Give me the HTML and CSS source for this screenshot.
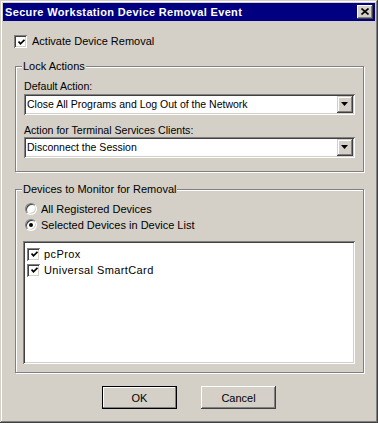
FILE: index.html
```html
<!DOCTYPE html>
<html lang="en">
<head>
    <meta charset="UTF-8">
    <title>Secure Workstation Device Removal Event</title>
    <link rel="stylesheet" href="styles.css">
</head>
<body>
    <div class="window">
        <div class="titlebar">
            <span class="title">Secure Workstation Device Removal Event</span>
            <span class="close-btn">
                <svg width="8" height="7" viewBox="0 0 8 7"><path d="M0.5 0.5 L7.5 6.5 M7.5 0.5 L0.5 6.5" stroke="#000" stroke-width="1.6" fill="none"/></svg>
            </span>
        </div>
        <div class="content">
            <div class="check-row activate">
                <span class="checkbox"><svg width="7" height="7" viewBox="0 0 7 7"><path d="M0.5 2.5 L2.5 4.8 L6.5 0.8" stroke="#000" stroke-width="1.8" fill="none"/></svg></span>
                <span>Activate Device Removal</span>
            </div>

            <div class="group lock-group">
                <span class="group-title">Lock Actions</span>
                <div class="field-label">Default Action:</div>
                <div class="combo">
                    <span class="combo-text">Close All Programs and Log Out of the Network</span>
                    <span class="combo-btn"><svg width="7" height="4" viewBox="0 0 7 4"><path d="M0 0 H7 L3.5 4 Z" fill="#000"/></svg></span>
                </div>
                <div class="field-label second">Action for Terminal Services Clients:</div>
                <div class="combo">
                    <span class="combo-text">Disconnect the Session</span>
                    <span class="combo-btn"><svg width="7" height="4" viewBox="0 0 7 4"><path d="M0 0 H7 L3.5 4 Z" fill="#000"/></svg></span>
                </div>
            </div>

            <div class="group devices-group">
                <span class="group-title">Devices to Monitor for Removal</span>
                <div class="radio-row">
                    <span class="radio"></span>
                    <span>All Registered Devices</span>
                </div>
                <div class="radio-row">
                    <span class="radio selected"><span class="dot"></span></span>
                    <span>Selected Devices in Device List</span>
                </div>
                <div class="listbox">
                    <div class="list-item">
                        <span class="checkbox small"><svg width="7" height="7" viewBox="0 0 7 7"><path d="M0.5 2.5 L2.5 4.8 L6.5 0.8" stroke="#000" stroke-width="1.8" fill="none"/></svg></span>
                        <span>pcProx</span>
                    </div>
                    <div class="list-item">
                        <span class="checkbox small"><svg width="7" height="7" viewBox="0 0 7 7"><path d="M0.5 2.5 L2.5 4.8 L6.5 0.8" stroke="#000" stroke-width="1.8" fill="none"/></svg></span>
                        <span>Universal SmartCard</span>
                    </div>
                </div>
            </div>

            <div class="buttons">
                <button class="btn default">OK</button>
                <button class="btn">Cancel</button>
            </div>
        </div>
    </div>
</body>
</html>
```

FILE: styles.css
```css
body {
    margin: 0;
    padding: 0;
    background-color: #d4d0c8;
    font-family: "Liberation Sans", Arial, sans-serif;
    font-size: 11px;
    color: #000;
}
.window {
    width: 378px;
    height: 423px;
    box-sizing: border-box;
    padding: 3px;
    background: #d4d0c8;
    box-shadow: inset -1px -1px #404040, inset 1px 1px #d4d0c8, inset -2px -2px #808080, inset 2px 2px #fff;
}
.titlebar {
    height: 18px;
    background: #000080;
    display: flex;
    align-items: center;
    justify-content: space-between;
    padding-left: 2px;
}
.title {
    color: #fff;
    font-weight: bold;
    font-size: 11px;
    letter-spacing: 0.35px;
    line-height: 18px;
}
.close-btn {
    width: 16px;
    height: 14px;
    box-sizing: border-box;
    margin-right: 2px;
    background: #d4d0c8;
    box-shadow: inset -1px -1px #404040, inset 1px 1px #fff, inset -2px -2px #808080;
    display: flex;
    align-items: center;
    justify-content: center;
}
.close-btn svg {
    margin-left: -1px;
    margin-top: -1px;
}
.content {
    padding: 14px 0 0 11px;
}
.check-row {
    display: flex;
    align-items: center;
    height: 13px;
    line-height: 13px;
}
.checkbox {
    width: 13px;
    height: 13px;
    box-sizing: border-box;
    background: #fff;
    box-shadow: inset 1px 1px #808080, inset -1px -1px #fff, inset 2px 2px #404040, inset -2px -2px #d4d0c8;
    display: flex;
    align-items: center;
    justify-content: center;
    margin-right: 5px;
    flex-shrink: 0;
}
.checkbox svg {
    margin-left: 1px;
    margin-top: 1px;
}
.checkbox.small {
    margin-right: 4px;
}
.group {
    position: relative;
    width: 349px;
    box-sizing: border-box;
    margin-left: 1px;
    border: 1px solid #808080;
    box-shadow: inset 1px 1px #fff, 1px 1px #fff;
}
.group-title {
    position: absolute;
    top: -7px;
    left: 6px;
    padding: 0 1px;
    line-height: 13px;
    background: #d4d0c8;
}
.lock-group {
    margin-top: 18px;
    height: 106px;
    padding: 13px 8px 0 8px;
}
.field-label {
    font-size: 10.6px;
    line-height: 13px;
    margin-bottom: 1px;
}
.field-label.second {
    margin-top: 9px;
    margin-bottom: 0;
}
.combo {
    height: 21px;
    box-sizing: border-box;
    padding: 2px;
    background: #fff;
    box-shadow: inset 1px 1px #808080, inset -1px -1px #fff, inset 2px 2px #404040, inset -2px -2px #d4d0c8;
    display: flex;
    align-items: center;
}
.combo-text {
    flex: 1;
    font-size: 10.5px;
    padding-left: 1px;
    line-height: 17px;
}
.combo-btn {
    width: 16px;
    height: 17px;
    box-sizing: border-box;
    background: #d4d0c8;
    box-shadow: inset -1px -1px #404040, inset 1px 1px #d4d0c8, inset -2px -2px #808080, inset 2px 2px #fff;
    display: flex;
    align-items: center;
    justify-content: center;
}
.combo-btn svg {
    margin-left: -1px;
    margin-top: -1px;
}
.devices-group {
    margin-top: 17px;
    height: 184px;
    padding: 11px 8px 0 7px;
}
.radio-row {
    display: flex;
    align-items: center;
    height: 16px;
    padding-left: 2px;
}
.radio {
    width: 12px;
    height: 12px;
    box-sizing: border-box;
    border-radius: 50%;
    border: 1px solid;
    border-color: #808080 #fff #fff #808080;
    background: #fff;
    box-shadow: inset 1px 1px #404040, inset -1px -1px #d4d0c8;
    margin-right: 4px;
    display: flex;
    align-items: center;
    justify-content: center;
}
.radio .dot {
    width: 4px;
    height: 4px;
    border-radius: 50%;
    background: #000;
}
.listbox {
    margin-top: 8px;
    height: 123px;
    box-sizing: border-box;
    padding: 5px 3px;
    background: #fff;
    box-shadow: inset 1px 1px #808080, inset -1px -1px #fff, inset 2px 2px #404040, inset -2px -2px #d4d0c8;
}
.list-item {
    display: flex;
    align-items: center;
    height: 16px;
    padding-left: 1px;
    letter-spacing: 0.4px;
}
.buttons {
    display: flex;
    justify-content: center;
    gap: 24px;
    margin-top: 13px;
    margin-left: -11px;
}
.btn {
    width: 75px;
    height: 23px;
    box-sizing: border-box;
    border: none;
    padding: 0;
    font-family: "Liberation Sans", Arial, sans-serif;
    font-size: 11px;
    color: #000;
    background: #d4d0c8;
    box-shadow: inset -1px -1px #404040, inset 1px 1px #fff, inset -2px -2px #808080, inset 2px 2px #d4d0c8;
}
.btn.default {
    border: 1px solid #000;
    box-shadow: inset -1px -1px #808080, inset 1px 1px #fff;
}
```
